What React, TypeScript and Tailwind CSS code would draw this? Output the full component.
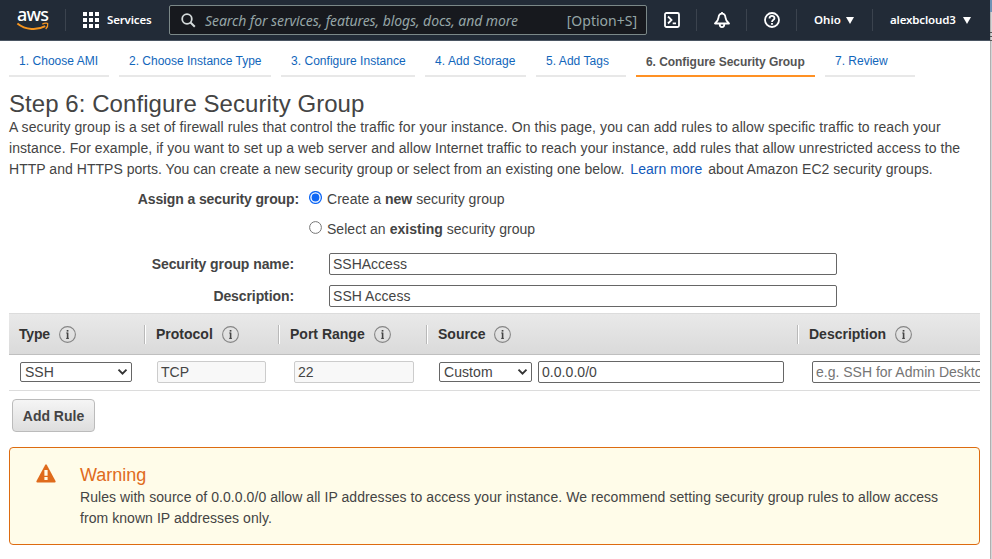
import type { ReactNode } from 'react';

const tabs = [
  { label: '1. Choose AMI', box: 'w-[100px]', text: 'tracking-[0.04px]' },
  { label: '2. Choose Instance Type', box: 'w-[152px]', text: 'tracking-[0px]' },
  { label: '3. Configure Instance', box: 'w-[134px]', text: 'tracking-[0.03px]' },
  { label: '4. Add Storage', box: 'w-[101px]', text: 'tracking-[0.08px]' },
  { label: '5. Add Tags', box: 'w-[90px]', text: 'tracking-[0.05px]' },
  { label: '6. Configure Security Group', box: 'w-[179px]', text: 'tracking-[-0.05px]', active: true },
  { label: '7. Review', box: 'w-[90px]', text: 'tracking-[0px]' },
];

function Divider() {
  return <div className="mt-[9px] h-[22px] w-px shrink-0 bg-[#3b434e]" />;
}

function Info() {
  return (
    <svg className="shrink-0" width="17" height="17" viewBox="0 0 17 17" fill="none">
      <circle cx="8.5" cy="8.5" r="7.9" stroke="#858585" strokeWidth="1.1" />
      <path d="M7.300 7h1.200v5.300M7.200 12.400h2.700" stroke="#444" strokeWidth="1" />
      <path d="M8.600 6.600v6.200" stroke="#444" strokeWidth="1.600" />
      <rect x="7.700" y="4" width="1.700" height="1.600" fill="#444" />
    </svg>
  );
}

function HeaderCell({ label, width, first = false, tracking = '' }: { label: string; width: string; first?: boolean; tracking?: string }) {
  return (
    <div className={`flex h-[40px] shrink-0 items-center ${width}`}>
      {!first && <div className="h-[19px] w-[2px] border-l border-[#b9b9b9] bg-white" />}
      <div className="flex items-center gap-[9px] pl-[10px]">
        <span className={`text-[14px] font-bold ${tracking}`}>{label}</span>
        <Info />
      </div>
    </div>
  );
}

function Select({ value, className }: { value: string; className: string }) {
  return (
    <div className={`flex h-[20px] shrink-0 items-center justify-between rounded-[2px] border border-[#666] bg-white pl-[4px] pr-[3px] text-[14px] leading-[18px] ${className}`}>
      <span>{value}</span>
      <svg width="11" height="8" viewBox="0 0 11 8" fill="none">
        <path d="M1.5 1.7 5.5 5.7 9.5 1.7" stroke="#333" strokeWidth="1.9" />
      </svg>
    </div>
  );
}

function Field({ children, className }: { children: ReactNode; className: string }) {
  return (
    <div className={`h-[22px] shrink-0 whitespace-nowrap rounded-[2px] border pl-[3px] text-[14px] leading-[20px] ${className}`}>
      {children}
    </div>
  );
}

function Radio({ checked = false }: { checked?: boolean }) {
  return (
    <svg className="mt-[2px] shrink-0" width="13" height="13" viewBox="0 0 13 13">
      <circle cx="6.5" cy="6.5" r="5.900" fill="#fff" stroke={checked ? '#1068f5' : '#767676'} strokeWidth={checked ? 1.3 : 1} />
      {checked && <circle cx="6.5" cy="6.5" r="3.9" fill="#1068f5" />}
    </svg>
  );
}

function TopBar() {
  return (
    <header className="flex h-[41px] shrink-0 border-b border-[#4a5562] bg-[#222b37] font-['Noto_Sans',sans-serif] text-white">
      <div className="relative w-[65px] shrink-0">
        <span className="absolute left-[17px] top-[4px] text-[18px] font-medium leading-[21px] tracking-[-0.8px]">aws</span>
        <svg className="absolute left-[16px] top-[22px]" width="34" height="10" viewBox="0 0 34 10" fill="none">
          <path d="M1.4 1.5C9.5 8.2 21.5 8.5 29.2 4.2" stroke="#f7951f" strokeWidth="1.9" />
          <path d="M26.3 2.2C28.8 1 31.700 1 31.700 1.6 32 3 31 5.700 29.700 7" stroke="#f7951f" strokeWidth="1.300" />
        </svg>
      </div>
      <Divider />
      <div className="flex w-[103px] shrink-0 items-center pl-[17px]">
        <div className="grid grid-cols-3 gap-[2px]">
          {Array.from({ length: 9 }, (_, i) => <i key={i} className="size-[4px] bg-white" />)}
        </div>
        <span className="ml-[8px] text-[11.5px] font-semibold tracking-[-0.15px]">Services</span>
      </div>
      <div className="mt-[5px] flex h-[30px] w-[478px] shrink-0 items-center rounded-[2px] border border-[#7b8888] bg-[#17191e] pl-[11px] pr-[9px] text-[14px] text-[#95a5a6]">
        <svg className="shrink-0" width="15" height="15" viewBox="0 0 15 15" fill="none">
          <circle cx="6" cy="6" r="4.800" stroke="#d5dbdb" strokeWidth="1.8" />
          <path d="M9.500 9.500 13.800 13.800" stroke="#d5dbdb" strokeWidth="2" />
        </svg>
        <span className="ml-[9px] italic tracking-[-0.075px]">Search for services, features, blogs, docs, and more</span>
        <span className="ml-auto">[Option+S]</span>
      </div>
      <div className="flex w-[49px] shrink-0 items-center pl-[17px]">
        <svg width="16" height="16" viewBox="0 0 16 16" fill="none" stroke="#fff" strokeWidth="1.8">
          <rect x="1" y="1" width="14" height="14" rx="1.500" />
          <path d="M4 4.500 7.500 8 4 11.500M8.700 11.300H12" />
        </svg>
      </div>
      <Divider />
      <div className="flex w-[49px] shrink-0 items-center pl-[17px]">
        <svg width="16" height="16" viewBox="0 0 16 16" fill="none" stroke="#fff" strokeWidth="1.800" strokeLinejoin="round">
          <path d="M8 1.600C5.700 1.600 4.700 3.300 4.500 5.600 4.300 7.900 3.300 9.600 1 11.500H15C12.700 9.600 11.700 7.900 11.500 5.600 11.300 3.300 10.300 1.600 8 1.600ZM8 0V2M5.700 12C5.700 16.100 10.300 16.100 10.300 12" />
        </svg>
      </div>
      <Divider />
      <div className="flex w-[49px] shrink-0 items-center pl-[17px]">
        <svg width="16" height="16" viewBox="0 0 16 16" fill="none" stroke="#fff" strokeWidth="1.800">
          <circle cx="8" cy="8" r="7" />
          <path d="M5.500 6.500C5.500 3 10.500 3.200 10.500 6.200 10.500 7.800 8 7.800 8 10M8 11V12.700" />
        </svg>
      </div>
      <Divider />
      <div className="flex w-[75px] shrink-0 items-center pl-[17px]">
        <span className="w-[27px] text-[11.5px] font-semibold">Ohio</span>
        <svg className="ml-[5px]" width="8" height="7"><path d="M0 0H8L4 7Z" fill="#fff" /></svg>
      </div>
      <Divider />
      <div className="flex items-center pl-[17px]">
        <span className="w-[66px] text-[11.5px] font-semibold tracking-[-0.15px]">alexbcloud3</span>
        <svg className="ml-[7px]" width="8" height="7"><path d="M0 0H8L4 7Z" fill="#fff" /></svg>
      </div>
    </header>
  );
}

export default function App() {
  return (
    <div className="flex h-[559px] w-[992px] overflow-hidden bg-white font-['Liberation_Sans',Arial,sans-serif] text-[14px] text-[#444]">
      <div className="flex w-[990px] shrink-0 flex-col">
        <TopBar />
        <nav className="flex h-[36px] shrink-0 gap-[10px] pl-[9px]">
          {tabs.map((t) => (
            <div key={t.label} className={`shrink-0 whitespace-nowrap border-b-2 pl-[10px] text-[12px] ${t.box} ${t.text} ${t.active ? 'border-[#ff9124] font-bold leading-[42px] text-[#545454]' : 'border-[#e8e8e8] leading-[40px] text-[#1166bb]'}`}>
              {t.label}
            </div>
          ))}
        </nav>
        <main className="flex w-[980px] flex-col overflow-hidden whitespace-nowrap pl-[9px]">
          <h1 className="mt-[12px] h-[28px] text-[24px] leading-[30px] tracking-[0.06px]">Step 6: Configure Security Group</h1>
          <div className="leading-[21px]">
            <p className="tracking-[0.083px]">A security group is a set of firewall rules that control the traffic for your instance. On this page, you can add rules to allow specific traffic to reach your</p>
            <p className="tracking-[0.073px]">instance. For example, if you want to set up a web server and allow Internet traffic to reach your instance, add rules that allow unrestricted access to the</p>
            <p className="tracking-[0.034px]">HTTP and HTTPS ports. You can create a new security group or select from an existing one below. <a className="mx-[2px] text-[#1159bb]">Learn more</a> about Amazon EC2 security groups.</p>
          </div>
          <div className="mt-[9px] flex h-[60px] leading-[21px]">
            <b className="w-[290px] text-right tracking-[-0.12px]">Assign a security group:</b>
            <div className="ml-[10px] flex flex-col gap-[9px] tracking-[0.035px]">
              <label className="flex gap-[5px]"><Radio checked /><span>Create a <b>new</b> security group</span></label>
              <label className="flex gap-[5px]"><Radio /><span>Select an <b>existing</b> security group</span></label>
            </div>
          </div>
          <div className="mt-[4px] flex leading-[22px]">
            <b className="w-[285px] text-right tracking-[-0.08px]">Security group name:</b>
            <Field className="ml-[35px] w-[508px] border-[#666]">SSHAccess</Field>
          </div>
          <div className="mt-[10px] flex leading-[22px]">
            <b className="w-[285px] text-right tracking-[-0.09px]">Description:</b>
            <Field className="ml-[35px] w-[508px] border-[#666] tracking-[0.05px]">SSH Access</Field>
          </div>
          <div className="mt-[6px] flex h-[42px] w-[971px] border-y border-t-[#dcdcdc] border-b-[#bfbfbf] bg-linear-to-b from-[#e9e9e9] to-[#dadada] text-[#333]">
            <HeaderCell first label="Type" width="w-[135px]" tracking="tracking-[-0.2px]" />
            <HeaderCell label="Protocol" width="w-[134px]" />
            <HeaderCell label="Port Range" width="w-[148px]" />
            <HeaderCell label="Source" width="w-[371px]" />
            <HeaderCell label="Description" width="w-[183px]" />
          </div>
          <div className="flex h-[36px] w-[971px] items-center overflow-hidden border-b border-[#dcdcdc] pb-[1px] pl-[11px]">
            <Select value="SSH" className="w-[112px]" />
            <Field className="ml-[25px] w-[109px] border-[#ccc] bg-[#f8f8f8]">TCP</Field>
            <Field className="ml-[28px] w-[120px] border-[#ccc] bg-[#f8f8f8]">22</Field>
            <Select value="Custom" className="ml-[25px] w-[93px] tracking-[0.07px]" />
            <Field className="ml-[6px] w-[246px] border-[#666] tracking-[0.05px]">0.0.0.0/0</Field>
            <Field className="ml-[28px] w-[190px] border-[#666] text-[#757575]">e.g. SSH for Admin Desktop</Field>
          </div>
          <button className="ml-[3px] mt-[8px] h-[33px] w-[83px] rounded-[4px] border border-[#bbb] bg-linear-to-b from-[#f5f5f5] to-[#dedede] pt-[2px] text-[14px] font-bold">Add Rule</button>
          <section className="mt-[15px] flex h-[98px] w-[971px] rounded-[4px] border border-[#dd6b10] bg-[#fffce9]">
            <svg className="ml-[26px] mt-[16px] shrink-0" width="20" height="19" viewBox="0 0 20 19">
              <path d="M9 1.200Q10-.5 11 1.200L19.500 17Q20 18.500 18.700 18.500H1.300Q0 18.500.500 17Z" fill="#df6b1c" />
              <path d="M8.400 6h3.200v5.800H8.400zM8.400 13h3.200v3H8.400z" fill="#fffce9" />
            </svg>
            <div className="ml-[24px] mt-[16px]">
              <h2 className="h-[23px] text-[18px] leading-[23px] text-[#df6b1c]">Warning</h2>
              <p className="leading-[21px] tracking-[0.06px]">Rules with source of 0.0.0.0/0 allow all IP addresses to access your instance. We recommend setting security group rules to allow access</p>
              <p className="leading-[21px] tracking-[0.06px]">from known IP addresses only.</p>
            </div>
          </section>
        </main>
      </div>
      <div className="flex w-[2px] shrink-0 flex-col border-l border-[#b0b0b0] bg-[#d4d4d6]">
        <div className="-ml-px h-[12px] bg-[#6f93b5]" />
        <div className="-ml-px mt-[20px] h-px bg-[#555]" />
        <div className="-ml-px mt-[3px] h-px bg-[#555]" />
        <div className="-ml-px mt-[3px] h-px bg-[#555]" />
      </div>
    </div>
  );
}
